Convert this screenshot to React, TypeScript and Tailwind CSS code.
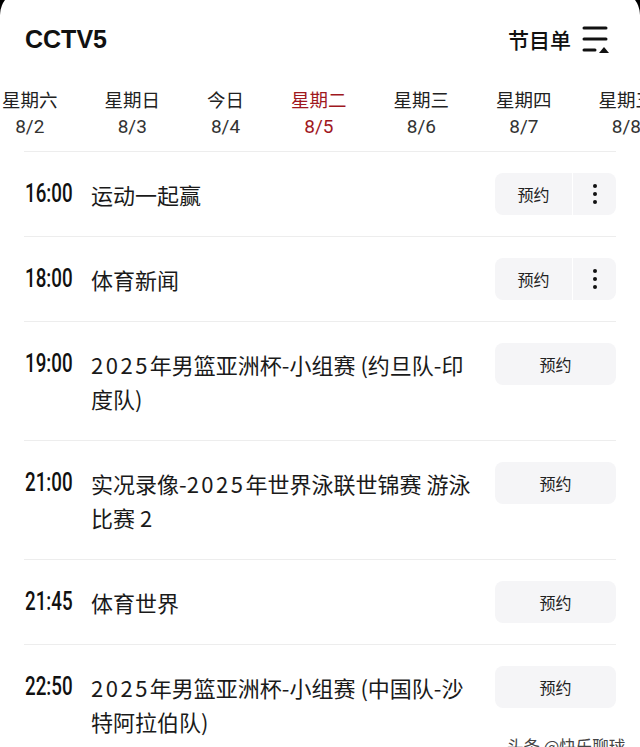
import React from "react";

const days = [
  { w: "星期六", d: "8/2" },
  { w: "星期日", d: "8/3" },
  { w: "今日", d: "8/4" },
  { w: "星期二", d: "8/5", active: true },
  { w: "星期三", d: "8/6" },
  { w: "星期四", d: "8/7" },
  { w: "星期五", d: "8/8" },
];

const programs = [
  { t: "16:00", title: "运动一起赢", more: true },
  { t: "18:00", title: "体育新闻", more: true },
  { t: "19:00", title: "2025年男篮亚洲杯-小组赛 (约旦队-印度队)" },
  { t: "21:00", title: "实况录像-2025年世界泳联世锦赛 游泳比赛 2" },
  { t: "21:45", title: "体育世界" },
  { t: "22:50", title: "2025年男篮亚洲杯-小组赛 (中国队-沙特阿拉伯队)" },
];

function Title({ text }: { text: string }) {
  const parts = text.split(/(\d+)/);
  return (
    <>
      {parts.map((p, i) =>
        /^\d+$/.test(p) ? (
          <span key={i} className="tracking-[2.5px]">
            {p}
          </span>
        ) : (
          <React.Fragment key={i}>{p}</React.Fragment>
        )
      )}
    </>
  );
}

function ListIcon() {
  return (
    <svg width="28" height="28" viewBox="0 0 28 28" fill="none">
      <line x1="3" y1="3" x2="25" y2="3" stroke="#111" strokeWidth="3" strokeLinecap="round" />
      <line x1="3" y1="14" x2="25" y2="14" stroke="#111" strokeWidth="3" strokeLinecap="round" />
      <line x1="3" y1="25" x2="14" y2="25" stroke="#111" strokeWidth="3" strokeLinecap="round" />
      <polygon points="18,28 28,28 23,22" fill="#111" />
    </svg>
  );
}

export default function App() {
  return (
    <div className="relative w-[640px] h-[747px] overflow-hidden bg-black font-['Noto_Sans_CJK_SC',sans-serif]">
      <div className="-mt-[10px] h-[757px] rounded-t-[25px] bg-white">
        {/* header */}
        <div className="flex h-[69px] items-end">
          <div className="flex h-[40px] w-full items-center justify-between pl-[25px] pr-[31px]">
            <div className="font-['Liberation_Sans',Arial,sans-serif] text-[25px] font-bold leading-none text-[#111]">
              CCTV5
            </div>
            <div className="flex items-center gap-[10px]">
              <span className="text-[21px] font-medium leading-none text-[#111]">节目单</span>
              <ListIcon />
            </div>
          </div>
        </div>

        {/* tabs */}
        <div className="mt-[26px] flex gap-[47px] overflow-hidden whitespace-nowrap pb-[10px] pl-[2px]">
          {days.map((x) => (
            <div key={x.d} className="flex shrink-0 flex-col items-center">
              <span
                className={
                  "text-[18.5px] leading-[28px] " + (x.active ? "text-[#a0181e]" : "text-[#222]")
                }
              >
                {x.w}
              </span>
              <span
                className={
                  "font-['Roboto',sans-serif] text-[19px] leading-[28px] " +
                  (x.active ? "text-[#a0181e]" : "text-[#333]")
                }
              >
                {x.d}
              </span>
            </div>
          ))}
        </div>

        {/* list */}
        <div className="mx-[24px]">
          {programs.map((p) => (
            <div key={p.t} className="flex items-start border-t border-[#ededed] py-[21px]">
              <div className="w-[67px] shrink-0 py-[4px] pl-[1px] text-[#111]">
                <span className="inline-block origin-left scale-x-[0.75] whitespace-nowrap font-['Roboto',sans-serif] text-[25px] font-medium leading-[34px]">
                  {p.t}
                </span>
              </div>
              <div className="w-[384px] shrink-0 py-[4px] text-[22px] leading-[34px] text-[#1a1a1a]">
                <Title text={p.title} />
              </div>
              <div className="ml-auto flex h-[42px] w-[121px] shrink-0 overflow-hidden rounded-[8px] bg-[#f5f5f7]">
                {p.more ? (
                  <>
                    <div className="flex w-[78px] items-center justify-center border-r border-white text-[16px] text-[#222]">
                      预约
                    </div>
                    <div className="flex flex-1 flex-col items-center justify-center gap-[4px]">
                      <span className="h-[4px] w-[4px] rounded-full bg-[#111]" />
                      <span className="h-[4px] w-[4px] rounded-full bg-[#111]" />
                      <span className="h-[4px] w-[4px] rounded-full bg-[#111]" />
                    </div>
                  </>
                ) : (
                  <div className="flex flex-1 items-center justify-center text-[16px] text-[#222]">
                    预约
                  </div>
                )}
              </div>
            </div>
          ))}
        </div>
      </div>

      <div className="absolute left-[507px] top-[734px] whitespace-nowrap text-[16.5px] leading-[24px] text-[#444]">
        头条 @快乐聊球
      </div>
    </div>
  );
}
